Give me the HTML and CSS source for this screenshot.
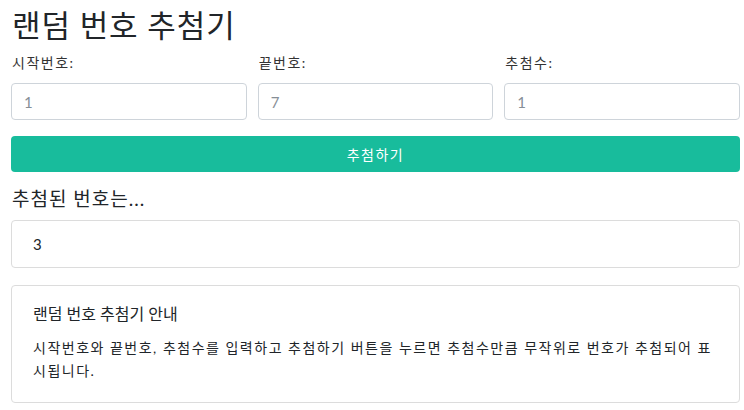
FILE: index.html
```html
<!DOCTYPE html>
<html lang="ko">

<head>
    <meta charset="UTF-8">
    <meta name="viewport" content="width=device-width, initial-scale=1.0">
    <title>랜덤 번호 추첨기</title>
    <link rel="stylesheet" href="styles.css">
</head>

<body>
    <div class="container">
        <h1>랜덤 번호 추첨기</h1>

        <form class="draw-form" action="#">
            <div class="field">
                <label for="start-num">시작번호:</label>
                <input type="number" id="start-num" placeholder="1">
            </div>
            <div class="field">
                <label for="end-num">끝번호:</label>
                <input type="number" id="end-num" placeholder="7">
            </div>
            <div class="field">
                <label for="count-num">추첨수:</label>
                <input type="number" id="count-num" placeholder="1">
            </div>
            <button type="button" class="btn-draw">추첨하기</button>
        </form>

        <h2>추첨된 번호는...</h2>
        <div class="result">3</div>

        <div class="guide">
            <h3>랜덤 번호 추첨기 안내</h3>
            <p>시작번호와 끝번호, 추첨수를 입력하고 추첨하기 버튼을 누르면 추첨수만큼 무작위로 번호가 추첨되어 표시됩니다.</p>
        </div>
    </div>
</body>

</html>
```

FILE: styles.css
```css
* {
    margin: 0;
    padding: 0;
    box-sizing: border-box;
}

body {
    font-family: Lato, "Noto Sans CJK KR", sans-serif;
    color: #212529;
    background: #fff;
}

.container {
    padding: 6px 4px 0 11px;
}

h1 {
    font-size: 31px;
    font-weight: 400;
    line-height: 38px;
    padding-left: 1px;
    letter-spacing: 0.9px;
}

.draw-form {
    display: grid;
    grid-template-columns: 1fr 1fr 1fr;
    column-gap: 11px;
    margin-top: 9px;
}

.field label {
    display: block;
    font-size: 14px;
    line-height: 20px;
    color: #333;
    margin-bottom: 10px;
    padding-left: 1px;
    letter-spacing: 1.5px;
}

.field input {
    display: block;
    width: 100%;
    height: 37px;
    border: 1px solid #ced4da;
    border-radius: 4px;
    padding: 0 12px;
    font-family: inherit;
    font-size: 15px;
    color: #495057;
}

.field input::placeholder {
    color: #868e96;
}

.btn-draw {
    grid-column: 1 / 4;
    margin-top: 16px;
    height: 36px;
    border: none;
    border-radius: 4px;
    background: #18bc9c;
    color: #fff;
    font-family: inherit;
    font-size: 14px;
    letter-spacing: 1.5px;
}

h2 {
    font-size: 19px;
    font-weight: 400;
    line-height: 28px;
    margin-top: 13px;
    padding-left: 1px;
    letter-spacing: 1px;
}

.result {
    margin-top: 7px;
    height: 48px;
    border: 1px solid #dcdcdc;
    border-radius: 4px;
    padding: 0 21px;
    font-size: 15px;
    line-height: 46px;
}

.guide {
    margin-top: 17px;
    border: 1px solid #dcdcdc;
    border-radius: 4px;
    padding: 16px 21px 20px;
}

.guide h3 {
    font-size: 16px;
    font-weight: 400;
    line-height: 24px;
}

.guide p {
    margin-top: 10px;
    font-size: 14px;
    line-height: 23px;
    letter-spacing: 1.5px;
    word-break: break-all;
}
```
